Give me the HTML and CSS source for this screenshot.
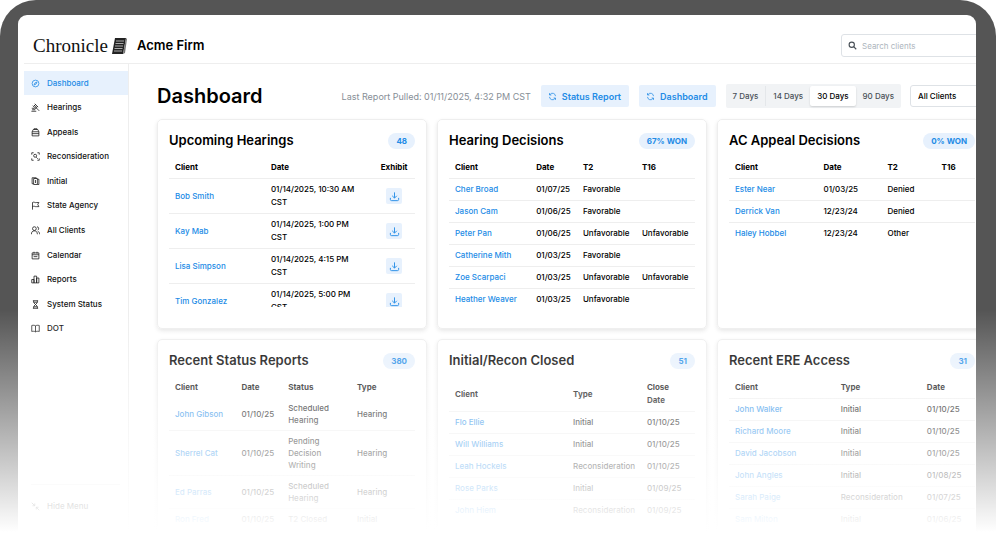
FILE: index.html
```html
<!DOCTYPE html>
<html lang="en">
<head>
  <meta charset="UTF-8" />
  <meta name="viewport" content="width=device-width, initial-scale=1.0" />
  <title>Dashboard - Chronicle</title>
  <link rel="stylesheet" href="styles.css">
</head>
<body>
  <!-- Shared icons -->
  <svg class="sprite" aria-hidden="true">
    <symbol id="i-download" viewBox="0 0 24 24"><path d="M12 3v12M7 10.500l5 5 5-5M3 15v3.500a2.500 2.500 0 0 0 2.500 2.500h13a2.500 2.500 0 0 0 2.500-2.500V15"/></symbol>
    <symbol id="i-refresh" viewBox="0 0 24 24"><path d="M4 13a8 8 0 0 0 14 5l2-2M20 11A8 8 0 0 0 6 6L4 8M4 3v5h5M20 21v-5h-5"/></symbol>
  </svg>

  <div class="device">
    <div class="screen">
      <div class="app">
        <header class="topbar">
          <a class="logo" href="#">Chronicle
            <svg class="logo-mark" viewBox="0 0 16 18" aria-hidden="true">
              <path d="M4 1h11l-3 16H1z" fill="#222"/>
              <path d="M15 1l-3 16 2-1 2-14z" fill="#777"/>
              <path d="M5 4h8M4.500 6.500h8M4 9h8M3.500 11.500h8M3 14h8" stroke="#aaa" stroke-width="1"/>
            </svg>
          </a>
          <span class="firm">Acme Firm</span>
          <div class="search">
            <label for="search" aria-label="Search clients"><svg class="icon" viewBox="0 0 24 24" aria-hidden="true"><circle cx="10" cy="10" r="7"/><path d="M15 15l7 7"/></svg></label>
            <input id="search" type="text" placeholder="Search clients">
          </div>
        </header>

        <div class="layout">
          <aside class="sidebar">
            <nav class="menu">
              <a class="active" href="#"><svg class="icon" viewBox="0 0 24 24"><circle cx="12" cy="12" r="9"/><path d="M16 8l-2.500 5.500L8 16l2.500-5.500z"/></svg>Dashboard</a>
              <a href="#"><svg class="icon" viewBox="0 0 24 24"><path d="M10 2l9 9M5 7l9 9M12 4L7 9M17 9l-5 5M9 6l6 6M13 12l9 9M2 14h6l2 3M1 22h13M3 18h8"/></svg>Hearings</a>
              <a href="#"><svg class="icon" viewBox="0 0 24 24"><path d="M3 21V10l3-6h12l3 6v11zM3 10h18M3 15h18M8 4V2h8v2"/></svg>Appeals</a>
              <a href="#"><svg class="icon" viewBox="0 0 24 24"><path d="M2 7V2h5M17 2h5v5M22 17v5h-5M7 22H2v-5M14 14l4 4"/><circle cx="11" cy="10" r="4"/></svg>Reconsideration</a>
              <a href="#"><svg class="icon" viewBox="0 0 24 24"><path d="M7 4h10v16H7zM3 2h11v2M3 2v16h4M17 6h4v14h-4M12 8v8"/></svg>Initial</a>
              <a href="#"><svg class="icon" viewBox="0 0 24 24"><path d="M4 23V4c5-3 7 2 11 0h6l-3 5 3 6h-6c-4 1-6-3-11 0"/></svg>State Agency</a>
              <a href="#"><svg class="icon" viewBox="0 0 24 24"><circle cx="9" cy="7" r="5"/><path d="M1 22c0-6 3-9 8-9s8 3 8 9M16 2c5 0 6 7 2 9M18 14c3 1 5 4 5 8"/></svg>All Clients</a>
              <a href="#"><svg class="icon" viewBox="0 0 24 24"><path d="M3 5h18v16H3zM3 10h18M8 2v5M16 2v5M7 15h10"/></svg>Calendar</a>
              <a href="#"><svg class="icon" viewBox="0 0 24 24"><path d="M2 12h6v9H2zM8 3h7v18H8zM15 8h6v13h-6z"/></svg>Reports</a>
              <a href="#"><svg class="icon" viewBox="0 0 24 24"><path d="M5 2h14M5 22h14M7 2v5l5 5 5-5V2M7 22v-5l5-5 5 5v5M8 6h8M8 18h8"/></svg>System Status</a>
              <a href="#"><svg class="icon" viewBox="0 0 24 24"><path d="M12 5c-3-2-6-2-10-1v16c4-1 7-1 10 1 3-2 6-2 10-1V4c-4-1-7-1-10 1zM12 5v16"/></svg>DOT</a>
            </nav>
            <div class="menu-foot">
              <button type="button"><svg class="icon" viewBox="0 0 24 24"><path d="M2 2l8 8M10 4v6H4M22 22l-8-8M14 20v-6h6"/></svg>Hide Menu</button>
            </div>
          </aside>

          <main class="content">
            <div class="toolbar">
              <h1>Dashboard</h1>
              <span class="pulled">Last Report Pulled: 01/11/2025, 4:32 PM CST</span>
              <button class="refresh" type="button"><svg class="icon"><use href="#i-refresh"/></svg>Status Report</button>
              <button class="refresh" type="button"><svg class="icon"><use href="#i-refresh"/></svg>Dashboard</button>
              <div class="range">
                <button type="button">7 Days</button>
                <button type="button">14 Days</button>
                <button class="on" type="button">30 Days</button>
                <button type="button">90 Days</button>
              </div>
              <select aria-label="Clients"><option>All Clients</option></select>
            </div>

            <div class="cards">
              <section class="card">
                <div class="card-head"><h2>Upcoming Hearings</h2><span class="badge">48</span></div>
                <div class="table-wrap">
                  <table class="hearings">
                    <thead><tr><th>Client</th><th>Date</th><th>Exhibit</th></tr></thead>
                    <tbody>
                      <tr><td><a href="#">Bob Smith</a></td><td>01/14/2025, 10:30 AM CST</td><td><button class="download" type="button" aria-label="Download"><svg class="icon"><use href="#i-download"/></svg></button></td></tr>
                      <tr><td><a href="#">Kay Mab</a></td><td>01/14/2025, 1:00 PM CST</td><td><button class="download" type="button" aria-label="Download"><svg class="icon"><use href="#i-download"/></svg></button></td></tr>
                      <tr><td><a href="#">Lisa Simpson</a></td><td>01/14/2025, 4:15 PM CST</td><td><button class="download" type="button" aria-label="Download"><svg class="icon"><use href="#i-download"/></svg></button></td></tr>
                      <tr><td><a href="#">Tim Gonzalez</a></td><td>01/14/2025, 5:00 PM CST</td><td><button class="download" type="button" aria-label="Download"><svg class="icon"><use href="#i-download"/></svg></button></td></tr>
                    </tbody>
                  </table>
                </div>
              </section>

              <section class="card">
                <div class="card-head"><h2>Hearing Decisions</h2><span class="badge">67% WON</span></div>
                <div class="table-wrap">
                  <table class="decisions">
                    <thead><tr><th>Client</th><th>Date</th><th>T2</th><th>T16</th></tr></thead>
                    <tbody>
                      <tr><td><a href="#">Cher Broad</a></td><td>01/07/25</td><td>Favorable</td><td></td></tr>
                      <tr><td><a href="#">Jason Cam</a></td><td>01/06/25</td><td>Favorable</td><td></td></tr>
                      <tr><td><a href="#">Peter Pan</a></td><td>01/06/25</td><td>Unfavorable</td><td>Unfavorable</td></tr>
                      <tr><td><a href="#">Catherine Mith</a></td><td>01/03/25</td><td>Favorable</td><td></td></tr>
                      <tr><td><a href="#">Zoe Scarpaci</a></td><td>01/03/25</td><td>Unfavorable</td><td>Unfavorable</td></tr>
                      <tr><td><a href="#">Heather Weaver</a></td><td>01/03/25</td><td>Unfavorable</td><td></td></tr>
                    </tbody>
                  </table>
                </div>
              </section>

              <section class="card">
                <div class="card-head"><h2>AC Appeal Decisions</h2><span class="badge">0% WON</span></div>
                <div class="table-wrap">
                  <table class="appeals">
                    <thead><tr><th>Client</th><th>Date</th><th>T2</th><th>T16</th></tr></thead>
                    <tbody>
                      <tr><td><a href="#">Ester Near</a></td><td>01/03/25</td><td>Denied</td><td></td></tr>
                      <tr><td><a href="#">Derrick Van</a></td><td>12/23/24</td><td>Denied</td><td></td></tr>
                      <tr><td><a href="#">Haley Hobbel</a></td><td>12/23/24</td><td>Other</td><td></td></tr>
                    </tbody>
                  </table>
                </div>
              </section>

              <section class="card">
                <div class="card-head"><h2>Recent Status Reports</h2><span class="badge">380</span></div>
                <div class="table-wrap">
                  <table class="reports">
                    <thead><tr><th>Client</th><th>Date</th><th>Status</th><th>Type</th></tr></thead>
                    <tbody>
                      <tr><td><a href="#">John Gibson</a></td><td>01/10/25</td><td>Scheduled Hearing</td><td>Hearing</td></tr>
                      <tr><td><a href="#">Sherrel Cat</a></td><td>01/10/25</td><td>Pending Decision Writing</td><td>Hearing</td></tr>
                      <tr><td><a href="#">Ed Parras</a></td><td>01/10/25</td><td>Scheduled Hearing</td><td>Hearing</td></tr>
                      <tr><td><a href="#">Ron Fred</a></td><td>01/10/25</td><td>T2 Closed</td><td>Initial</td></tr>
                    </tbody>
                  </table>
                </div>
              </section>

              <section class="card">
                <div class="card-head"><h2>Initial/Recon Closed</h2><span class="badge">51</span></div>
                <div class="table-wrap">
                  <table class="closed">
                    <thead><tr><th>Client</th><th>Type</th><th>Close Date</th></tr></thead>
                    <tbody>
                      <tr><td><a href="#">Flo Ellie</a></td><td>Initial</td><td>01/10/25</td></tr>
                      <tr><td><a href="#">Will Williams</a></td><td>Initial</td><td>01/10/25</td></tr>
                      <tr><td><a href="#">Leah Hockels</a></td><td>Reconsideration</td><td>01/10/25</td></tr>
                      <tr><td><a href="#">Rose Parks</a></td><td>Initial</td><td>01/09/25</td></tr>
                      <tr><td><a href="#">John Hiem</a></td><td>Reconsideration</td><td>01/09/25</td></tr>
                    </tbody>
                  </table>
                </div>
              </section>

              <section class="card">
                <div class="card-head"><h2>Recent ERE Access</h2><span class="badge">31</span></div>
                <div class="table-wrap">
                  <table class="access">
                    <thead><tr><th>Client</th><th>Type</th><th>Date</th></tr></thead>
                    <tbody>
                      <tr><td><a href="#">John Walker</a></td><td>Initial</td><td>01/10/25</td></tr>
                      <tr><td><a href="#">Richard Moore</a></td><td>Initial</td><td>01/10/25</td></tr>
                      <tr><td><a href="#">David Jacobson</a></td><td>Initial</td><td>01/10/25</td></tr>
                      <tr><td><a href="#">John Angles</a></td><td>Initial</td><td>01/08/25</td></tr>
                      <tr><td><a href="#">Sarah Paige</a></td><td>Reconsideration</td><td>01/07/25</td></tr>
                      <tr><td><a href="#">Sam Milton</a></td><td>Initial</td><td>01/06/25</td></tr>
                    </tbody>
                  </table>
                </div>
              </section>
            </div>
          </main>
        </div>
      </div>
    </div>
  </div>
</body>
</html>
```

FILE: styles.css
```css
* {
  box-sizing: border-box;
}
body {
  margin: 0;
  background: #fff;
  color: #000;
  font-family: Inter, "Liberation Sans", sans-serif;
  font-size: 8px;
  line-height: 13px;
  font-weight: 500;
}
a {
  color: #228be6;
  text-decoration: none;
}
button,
input,
select {
  font: inherit;
  color: inherit;
  border: 0;
  margin: 0;
  padding: 0;
  background: none;
}
h1,
h2 {
  margin: 0;
}
.sprite {
  display: none;
}
.icon {
  display: block;
  width: 9px;
  height: 9px;
  flex: none;
  fill: none;
  stroke: currentColor;
  stroke-width: 2;
}

/* device frame */
.device {
  position: relative;
  height: 100vh;
  padding: 15px 20px 0 18px;
  border-radius: 36px 36px 0 0;
  background: #555;
  overflow: hidden;
}
.device::after {
  content: "";
  position: absolute;
  inset: 0;
  background: linear-gradient(rgba(255, 255, 255, 0) 310px, #fff 532px);
  pointer-events: none;
}
.screen {
  height: 100%;
  padding-left: 6px;
  border-radius: 9px 9px 0 0;
  background: #fff;
  overflow: hidden;
}
/* the app runs past the right edge of the screen */
.app {
  display: flex;
  flex-direction: column;
  height: 100%;
  margin-right: -40px;
}

.topbar {
  display: flex;
  align-items: center;
  padding: 19px 29px 6px 9px;
  border-bottom: 1px solid #eee;
}
.logo {
  display: flex;
  align-items: center;
  gap: 3px;
  color: #111;
  font-family: "Liberation Serif", serif;
  font-size: 19px;
}
.logo-mark {
  width: 16px;
  height: 18px;
}
.firm {
  margin-left: 10px;
  font-size: 13px;
  font-weight: 600;
}
.search {
  display: flex;
  align-items: center;
  gap: 5px;
  width: 146px;
  height: 23px;
  margin-left: auto;
  padding: 0 6px;
  border: 1px solid #dee2e6;
  border-radius: 3px;
  color: #495057;
}
.search .icon {
  stroke-width: 3;
}
.search input {
  flex: 1;
  min-width: 0;
  height: 15px;
  font-weight: 400;
  outline: none;
}
.search input::placeholder {
  color: #adb5bd;
  opacity: 1;
}

.layout {
  display: flex;
  flex: 1;
  min-height: 0;
}
.sidebar {
  display: flex;
  flex-direction: column;
  width: 105px;
  flex: none;
  padding: 7px 0 29px;
  border-right: 1px solid #eee;
}
.menu {
  display: flex;
  flex-direction: column;
  justify-content: space-between;
  height: 270px;
}
.menu a,
.menu-foot button {
  display: flex;
  align-items: center;
  gap: 7px;
  height: 24px;
  padding-left: 7px;
  color: #111;
}
.menu a.active {
  background: #e7f1fd;
  color: #228be6;
}
.menu-foot {
  margin: auto 8px 0 7px;
  padding-top: 9px;
  border-top: 1px solid #eee;
}
.menu-foot button {
  padding-left: 0;
}

.content {
  flex: 1;
  min-width: 0;
  padding: 20px 29px 0 28px;
}
.toolbar {
  display: flex;
  align-items: center;
  height: 24px;
  margin-bottom: 11px;
}
.toolbar h1 {
  font-size: 20px;
  line-height: 26px;
  font-weight: 600;
}
.pulled {
  margin-left: auto;
  color: #868e96;
  font-size: 9px;
  font-weight: 400;
}
.refresh {
  display: flex;
  align-items: center;
  gap: 5px;
  height: 22px;
  margin-left: 10px;
  padding: 0 8px 0 7px;
  border-radius: 2px;
  background: #e7f1fd;
  color: #228be6;
  font-size: 9px;
  font-weight: 600;
}
.range {
  display: flex;
  height: 24px;
  margin-left: 10px;
  padding: 2px 0;
  border-radius: 2px;
  background: #f1f3f5;
}
.range button {
  padding: 0 7px;
  color: #495057;
}
.range button:first-child {
  border-right: 1px solid #e4e7ea;
}
.range .on {
  border-radius: 2px;
  background: #fff;
  color: #000;
  box-shadow: 0 1px 2px rgba(0, 0, 0, 0.15);
}
.toolbar select {
  width: 77px;
  height: 22px;
  margin-left: 9px;
  padding: 0 7px;
  border: 1px solid #dee2e6;
  border-radius: 3px;
  appearance: none;
}

.cards {
  display: grid;
  grid-template-columns: repeat(3, 1fr);
  grid-auto-rows: 210px;
  gap: 10px;
}
.card {
  display: flex;
  flex-direction: column;
  min-width: 0;
  padding: 12px 11px 21px;
  border: 1px solid #eee;
  border-radius: 5px;
  box-shadow: 0 2px 4px rgba(0, 0, 0, 0.1);
}
.card-head {
  display: flex;
  align-items: center;
  justify-content: space-between;
  height: 17px;
  margin-bottom: 8px;
}
.card h2 {
  font-size: 13px;
  line-height: 17px;
  font-weight: 600;
}
.badge {
  padding: 0 8px;
  border-radius: 8px;
  background: #e7f1fd;
  color: #228be6;
  line-height: 16px;
  font-weight: 700;
}
.table-wrap {
  flex: 1;
  min-height: 0;
  overflow: hidden;
}

table {
  width: 100%;
  table-layout: fixed;
  border-collapse: collapse;
}
th,
td {
  padding: 4px 0 4px 6px;
  border-bottom: 1px solid #eee;
  text-align: left;
}
th {
  font-weight: 700;
}
tbody tr:last-child td {
  border-bottom: 0;
}

.hearings th:nth-child(1) { width: 39%; }
.hearings th:nth-child(2) { width: 44%; }
.hearings td:nth-child(2) {
  padding-right: 12px;
}
.hearings th:last-child,
.hearings td:last-child {
  padding-left: 0;
  text-align: center;
}
.decisions th:nth-child(1) { width: 33%; }
.decisions th:nth-child(2) { width: 19%; }
.decisions th:nth-child(3) { width: 24%; }
.appeals th:nth-child(1) { width: 36%; }
.appeals th:nth-child(2) { width: 26%; }
.appeals th:nth-child(3) { width: 22%; }
.reports th:nth-child(1) { width: 27%; }
.reports th:nth-child(2) { width: 19%; }
.reports th:nth-child(3) { width: 28%; }
.reports th {
  border-bottom: 0;
}
.reports td {
  line-height: 12px;
}
.reports td:nth-child(3) {
  padding-right: 12px;
}
.closed th:nth-child(1) { width: 48%; }
.closed th:nth-child(2) { width: 30%; }
.closed th:nth-child(3) { padding-right: 12px; }
.access th:nth-child(1) { width: 43%; }
.access th:nth-child(2) { width: 35%; }

.download {
  display: inline-flex;
  align-items: center;
  justify-content: center;
  width: 16px;
  height: 16px;
  border-radius: 2px;
  background: #e7f1fd;
  color: #228be6;
  vertical-align: middle;
}
.download .icon {
  width: 11px;
  height: 11px;
}
```
